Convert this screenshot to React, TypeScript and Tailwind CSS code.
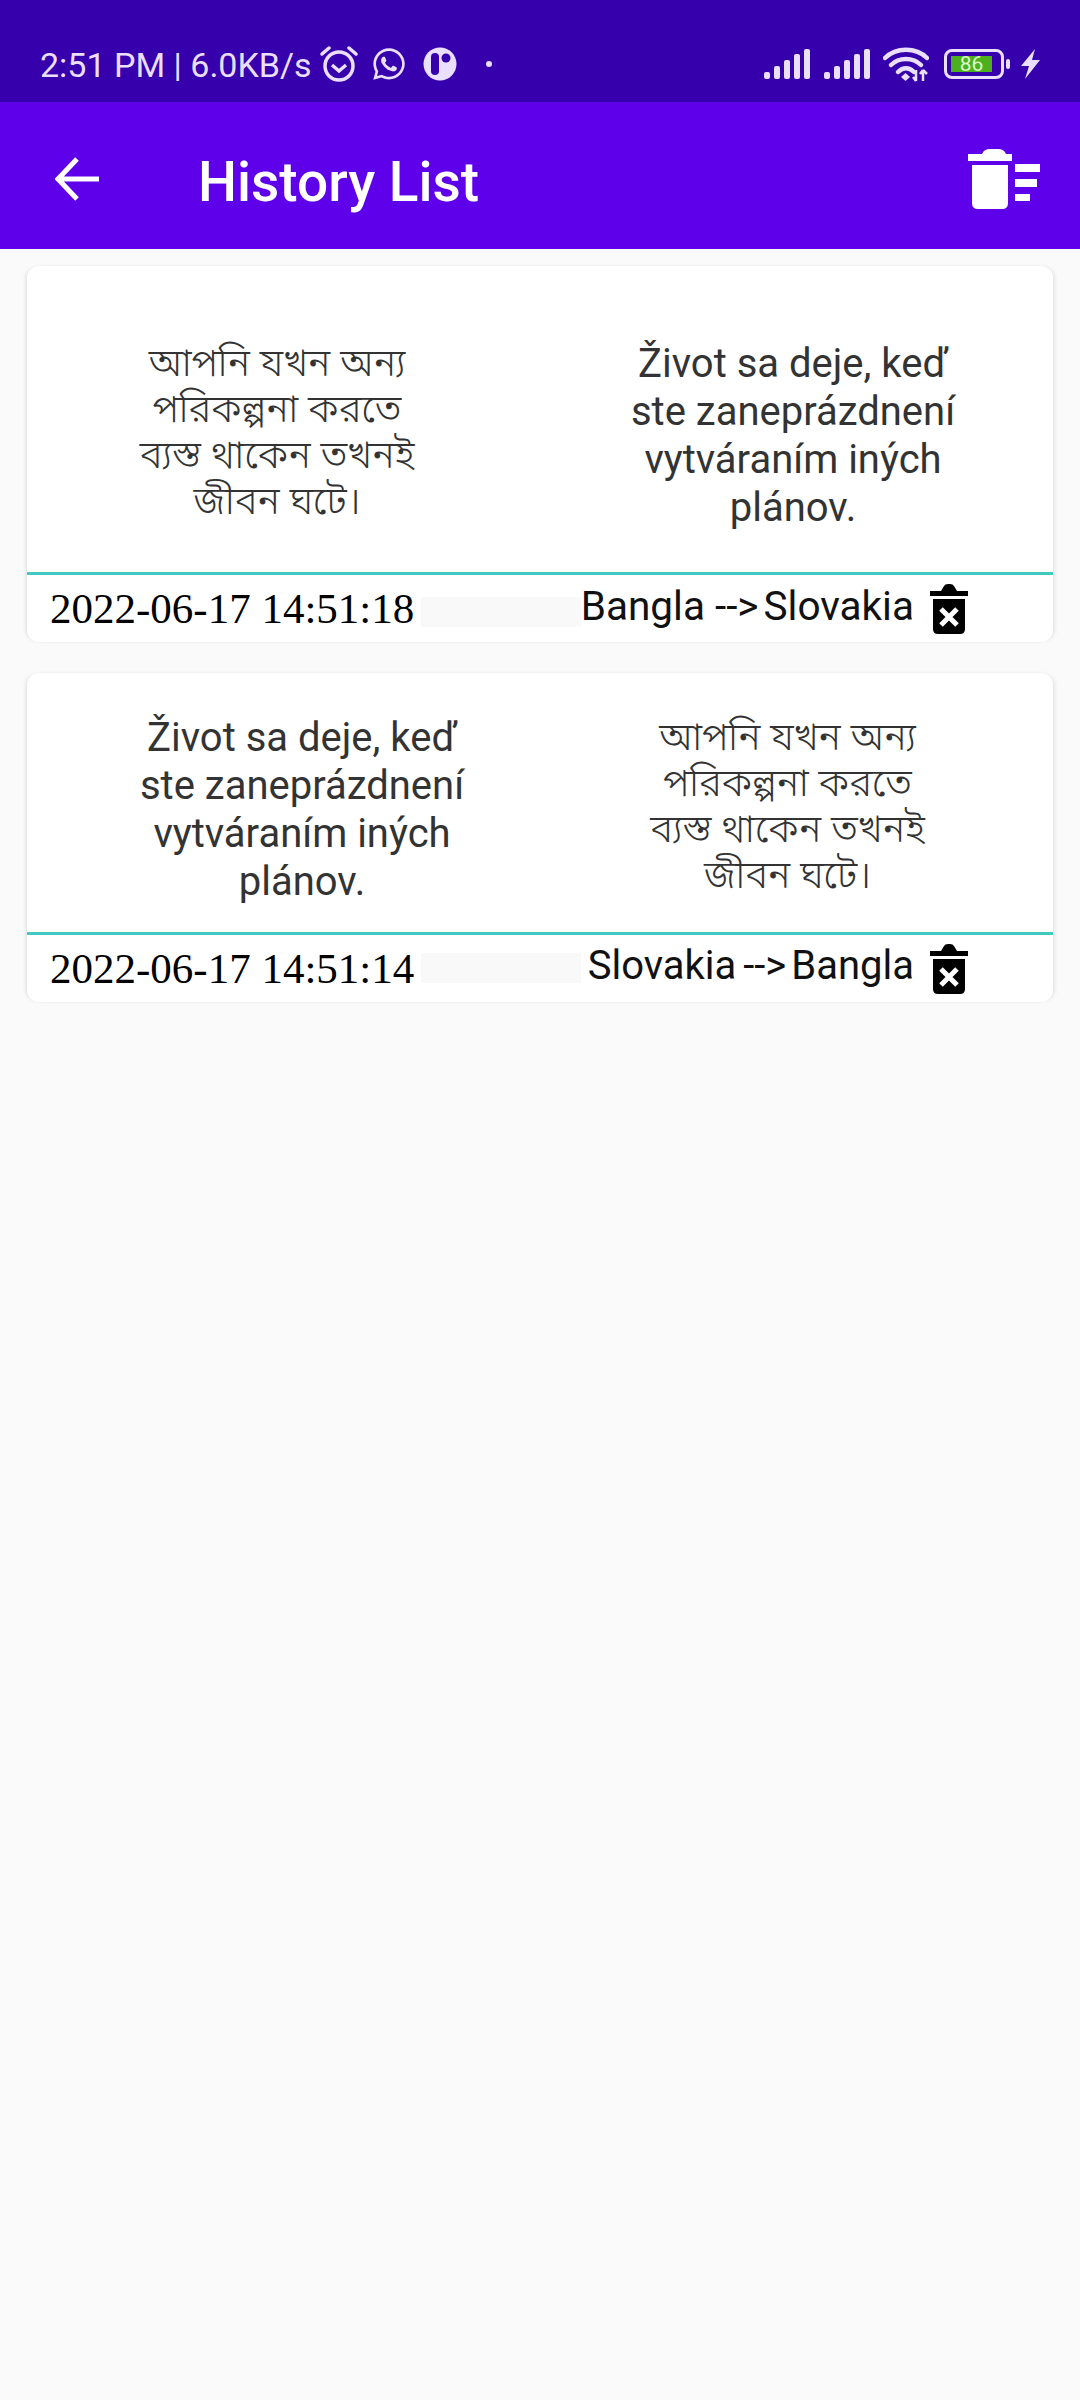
import React from 'react';
import { FaWhatsapp } from 'react-icons/fa';

const BN = ['আপনি যখন অন্য', 'পরিকল্পনা করতে', 'ব্যস্ত থাকেন তখনই', 'জীবন ঘটে।'];
const SK = ['Život sa deje, keď', 'ste zaneprázdnení', 'vytváraním iných', 'plánov.'];

const Signal = ({ className }: { className: string }) => (
  <svg viewBox="0 0 46 30" className={className} fill="#eadffc">
    <rect x="0" y="23" width="6" height="7" rx="2" />
    <rect x="10" y="17" width="6" height="13" rx="2" />
    <rect x="20" y="11" width="6" height="19" rx="2" />
    <rect x="30" y="5" width="6" height="25" rx="2" />
    <rect x="40" y="0" width="6" height="30" rx="2" />
  </svg>
);

const Wifi = () => (
  <svg viewBox="0 0 46 36" className="w-[46px] h-[36px] ml-[13px]" fill="none" stroke="#eadffc">
    <path d="M2 12 C13 1 33 1 44 12" strokeWidth="4.5" strokeLinecap="round" />
    <path d="M8 19 C16 11 30 11 38 19" strokeWidth="4.5" strokeLinecap="round" />
    <path d="M15 26 C20 21 26 21 31 26" strokeWidth="4.5" strokeLinecap="round" />
    <path d="M18 31 L22.500 27 L27 31 L22.500 35 Z" fill="#eadffc" stroke="none" />
    <path d="M33 24 V35 M33 35 L30 31 M40 35 V24 M40 24 L37 28 M40 24 L44 28" strokeWidth="2.500" />
  </svg>
);

const BinX = () => (
  <svg viewBox="0 0 38 52" className="w-[38px] h-[52px] shrink-0">
    <path d="M0 8 H11 L14 3 Q15 1 18 1 H20 Q23 1 24 3 L27 8 H38 V13 H0 Z" fill="#000" />
    <path d="M3 16 H35 V46 Q35 51 30 51 H8 Q3 51 3 46 Z" fill="#000" />
    <path d="M11 26 L27 42 M27 26 L11 42" stroke="#fff" strokeWidth="5" />
  </svg>
);

const Lines = ({ lines, className }: { lines: string[]; className: string }) => (
  <div className={className}>
    {lines.map((l) => (
      <div key={l}>{l}</div>
    ))}
  </div>
);

export default function App() {
  return (
    <div className="min-h-[2400px] bg-[#fafafa] font-['Roboto',sans-serif]">
      {/* Status bar */}
      <div className="h-[102px] bg-[#3600ad] flex items-center pt-[26px] pl-[40px] text-[#eadffc]">
        <span className="w-[282px] shrink-0 text-[34px] leading-[38px] pt-[1px] whitespace-nowrap">2:51 PM | 6.0KB/s</span>
        <svg viewBox="0 0 38 38" className="w-[38px] h-[38px] -ml-[2px]" fill="none" stroke="#eadffc" strokeWidth="3.500">
          <circle cx="19" cy="21" r="14" />
          <path d="M12 20 L19 26 L26 20" />
          <path d="M2 9 L9 3 M36 9 L29 3" strokeLinecap="round" />
        </svg>
        <FaWhatsapp className="w-[36px] h-[36px] ml-[13px] text-[#eadffc]" />
        <svg viewBox="0 0 34 34" className="w-[34px] h-[34px] ml-[16px]">
          <circle cx="17" cy="17" r="16.500" fill="#eadffc" />
          <rect x="8" y="6" width="8" height="22" rx="4" fill="#3600ad" />
          <circle cx="23" cy="11" r="4.500" fill="#3600ad" />
        </svg>
        <span className="w-[6px] h-[6px] ml-[29px] rounded-full bg-[#eadffc]" />
        <div className="ml-auto flex items-center pr-[40px]">
          <Signal className="w-[46px] h-[30px]" />
          <Signal className="w-[46px] h-[30px] ml-[14px]" />
          <Wifi />
          <div className="ml-[15px] w-[60px] h-[30px] rounded-[8px] border-[3px] border-[#eadffc] p-[4px]">
            <div className="w-[41px] h-[16px] bg-[#4caf1e] text-[21px] leading-[16px] text-center text-[#dcfbc8]">86</div>
          </div>
          <span className="ml-[2px] w-[4px] h-[10px] rounded-full bg-[#eadffc]" />
          <svg viewBox="0 0 20 30" className="w-[20px] h-[30px] ml-[10px]" fill="#eadffc">
            <path d="M15 0 L1 17 H9 L5 30 L20 11 H12 Z" />
          </svg>
        </div>
      </div>

      {/* App bar */}
      <div className="h-[147px] bg-[#5f00ea] flex items-center text-white">
        <svg viewBox="0 0 44 44" className="ml-[55px] mt-[6px] w-[44px] h-[44px]" fill="none" stroke="#fff" strokeWidth="5">
          <path d="M44 22 H3 M22 2 L3 22 L22 42" />
        </svg>
        <h1 className="ml-[99px] mt-[12px] text-[55px] leading-[64px] font-medium">History List</h1>
        <svg viewBox="0 0 72 60" className="ml-auto mr-[40px] mt-[6px] w-[72px] h-[60px]" fill="#fff">
          <path d="M0 5 H14 Q16 0 22 0 H30 Q36 0 38 5 H44 V12 H0 Z" />
          <path d="M4 16 H40 V54 Q40 60 34 60 H10 Q4 60 4 54 Z" />
          <rect x="47" y="15" width="25" height="8" />
          <rect x="47" y="30" width="22" height="8" />
          <rect x="47" y="45" width="15" height="7" />
        </svg>
      </div>

      {/* History cards */}
      <div className="px-[27px] pt-[17px] flex flex-col gap-[31px]">
        <div className="rounded-[12px] bg-white shadow-[-3px_0_4px_-2px_rgba(0,0,0,0.12),3px_0_5px_-2px_rgba(0,0,0,0.12)] overflow-hidden">
          <div className="h-[306px] flex items-center text-[#333] text-center">
            <Lines lines={BN} className="w-[500px] shrink-0 pt-[34px] text-[38.500px] leading-[46px] font-light font-['Noto_Sans_Bengali','Noto_Sans','Lohit_Bengali',sans-serif]" />
            <Lines lines={SK} className="w-[526px] shrink-0 pl-[6px] pt-[34px] text-[40px] leading-[48px]" />
          </div>
          <div className="h-[3px] bg-[#40c9c0]" />
          <div className="h-[67px] flex items-center pl-[23px] pr-[85px]">
            <span className="w-[371px] shrink-0 font-['Liberation_Serif',serif] text-[43px] leading-[50px] text-black">2022-06-17 14:51:18</span>
            <div className="w-[160px] h-[30px] mt-[6px] bg-[#f9f9f9]" />
            <span className="ml-auto pb-[5px] text-[40.500px] leading-[48px] text-[#111] whitespace-nowrap">Bangla --&gt;<span className="ml-[5px]">Slovakia</span></span>
            <div className="ml-[16px]"><BinX /></div>
          </div>
        </div>

        <div className="rounded-[12px] bg-white shadow-[-3px_0_4px_-2px_rgba(0,0,0,0.12),3px_0_5px_-2px_rgba(0,0,0,0.12)] overflow-hidden">
          <div className="h-[259px] flex items-center text-[#333] text-center">
            <Lines lines={SK} className="w-[550px] shrink-0 pt-[15px] text-[40px] leading-[48px]" />
            <Lines lines={BN} className="w-[476px] shrink-0 pr-[55px] pt-[15px] text-[38.500px] leading-[46px] font-light font-['Noto_Sans_Bengali','Noto_Sans','Lohit_Bengali',sans-serif]" />
          </div>
          <div className="h-[3px] bg-[#40c9c0]" />
          <div className="h-[67px] flex items-center pl-[23px] pr-[85px]">
            <span className="w-[371px] shrink-0 font-['Liberation_Serif',serif] text-[43px] leading-[50px] text-black">2022-06-17 14:51:14</span>
            <div className="w-[160px] h-[30px] mt-[-2px] bg-[#f9f9f9]" />
            <span className="ml-auto pb-[5px] text-[40px] leading-[48px] text-[#111] whitespace-nowrap">Slovakia<span className="ml-[7px]">--&gt;</span><span className="ml-[5px]">Bangla</span></span>
            <div className="ml-[16px]"><BinX /></div>
          </div>
        </div>
      </div>
    </div>
  );
}
